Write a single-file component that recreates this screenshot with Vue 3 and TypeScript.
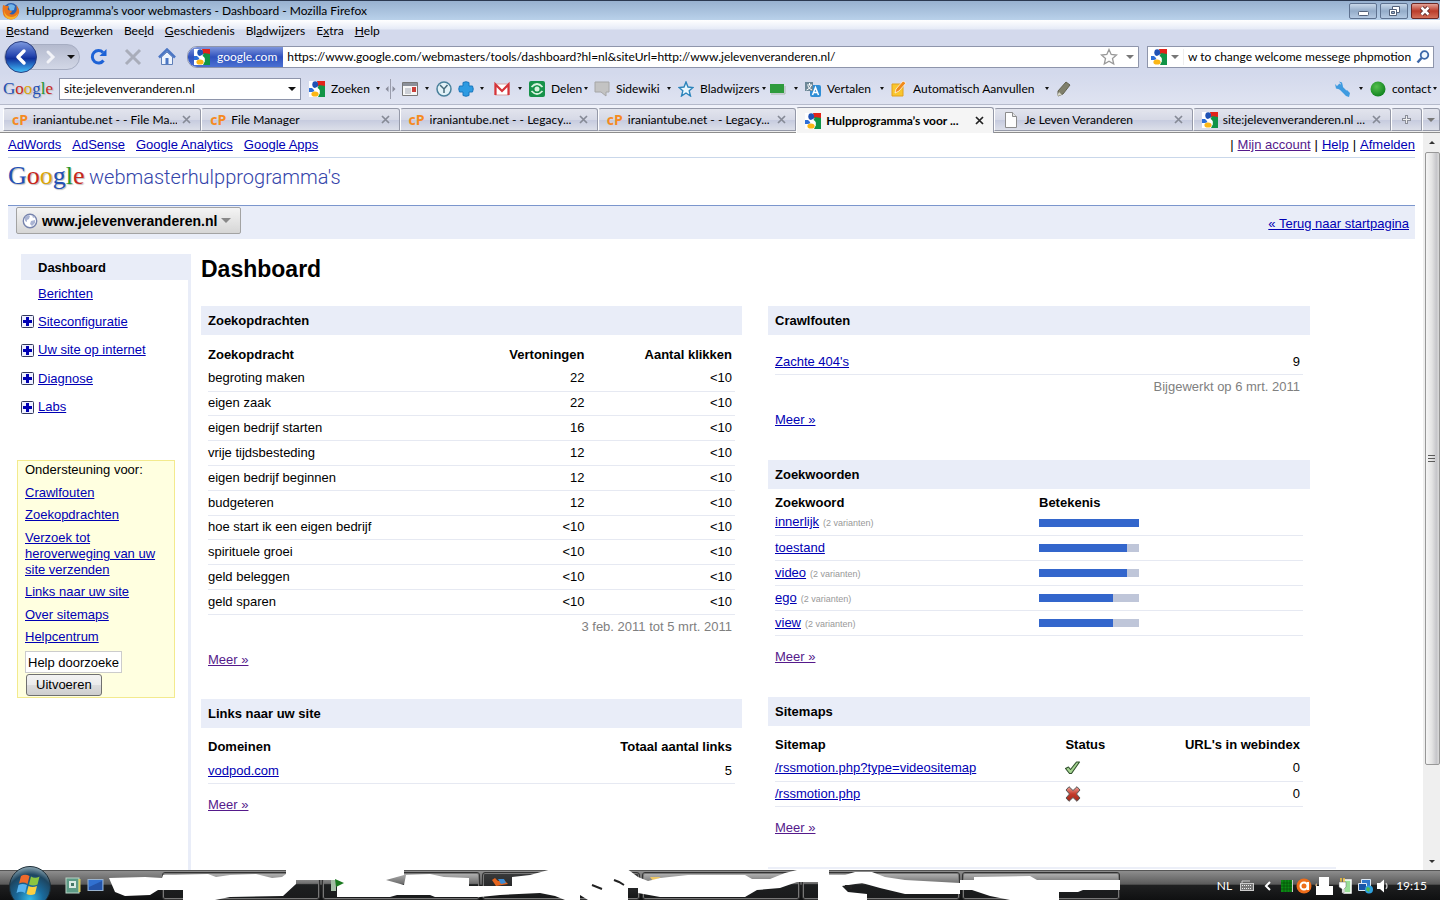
<script setup lang="ts">
interface MenuEntry { before: string; key: string; after: string }
interface Tab { icon: string; title: string; active?: boolean }
interface Query { term: string; shown: string; clicks: string }
interface Keyword { word: string; variants?: string; weight: number }
interface Sitemap { path: string; ok: boolean; urls: number }

const menu: MenuEntry[] = [
  { before: '', key: 'B', after: 'estand' },
  { before: 'Be', key: 'w', after: 'erken' },
  { before: 'Bee', key: 'l', after: 'd' },
  { before: '', key: 'G', after: 'eschiedenis' },
  { before: 'Bl', key: 'a', after: 'dwijzers' },
  { before: 'E', key: 'x', after: 'tra' },
  { before: '', key: 'H', after: 'elp' },
]

const tabs: Tab[] = [
  { icon: 'cp', title: 'iraniantube.net - - File Ma...' },
  { icon: 'cp', title: 'File Manager' },
  { icon: 'cp', title: 'iraniantube.net - - Legacy...' },
  { icon: 'cp', title: 'iraniantube.net - - Legacy...' },
  { icon: 'google', title: 'Hulpprogramma’s voor ...', active: true },
  { icon: 'page', title: 'Je Leven Veranderen' },
  { icon: 'google', title: 'site:jelevenveranderen.nl ...' },
]

const products: string[] = ['AdWords', 'AdSense', 'Google Analytics', 'Google Apps']
const sections: string[] = ['Siteconfiguratie', 'Uw site op internet', 'Diagnose', 'Labs']
const helpLinks: string[] = [
  'Crawlfouten', 'Zoekopdrachten', 'Verzoek tot heroverweging van uw site verzenden',
  'Links naar uw site', 'Over sitemaps', 'Helpcentrum',
]

const queries: Query[] = [
  { term: 'begroting maken', shown: '22', clicks: '<10' },
  { term: 'eigen zaak', shown: '22', clicks: '<10' },
  { term: 'eigen bedrijf starten', shown: '16', clicks: '<10' },
  { term: 'vrije tijdsbesteding', shown: '12', clicks: '<10' },
  { term: 'eigen bedrijf beginnen', shown: '12', clicks: '<10' },
  { term: 'budgeteren', shown: '12', clicks: '<10' },
  { term: 'hoe start ik een eigen bedrijf', shown: '<10', clicks: '<10' },
  { term: 'spirituele groei', shown: '<10', clicks: '<10' },
  { term: 'geld beleggen', shown: '<10', clicks: '<10' },
  { term: 'geld sparen', shown: '<10', clicks: '<10' },
]

const keywords: Keyword[] = [
  { word: 'innerlijk', variants: '(2 varianten)', weight: 100 },
  { word: 'toestand', weight: 88 },
  { word: 'video', variants: '(2 varianten)', weight: 88 },
  { word: 'ego', variants: '(2 varianten)', weight: 74 },
  { word: 'view', variants: '(2 varianten)', weight: 74 },
]

const sitemaps: Sitemap[] = [
  { path: '/rssmotion.php?type=videositemap', ok: true, urls: 0 },
  { path: '/rssmotion.php', ok: false, urls: 0 },
]
</script>

<template>
  <div class="screen">
    <svg class="sprite" width="0" height="0" aria-hidden="true">
      <defs>
        <linearGradient id="orbBlue" x1="0" y1="0" x2="0" y2="1">
          <stop offset="0" stop-color="#7f9be0" /><stop offset=".45" stop-color="#2747b0" />
          <stop offset=".55" stop-color="#10309c" /><stop offset="1" stop-color="#43c3fb" />
        </linearGradient>
        <linearGradient id="xRed" x1="0" y1="0" x2="0" y2="1">
          <stop offset="0" stop-color="#eba59c" /><stop offset=".5" stop-color="#c43a2a" /><stop offset="1" stop-color="#a02a1c" />
        </linearGradient>
        <radialGradient id="startOrb" cx=".5" cy=".8" r=".8">
          <stop offset="0" stop-color="#35b9e6" /><stop offset=".4" stop-color="#1a6a9c" />
          <stop offset=".75" stop-color="#1d4560" /><stop offset="1" stop-color="#8fa9b5" />
        </radialGradient>
        <radialGradient id="greenBall" cx=".4" cy=".35" r=".7">
          <stop offset="0" stop-color="#55c04d" /><stop offset="1" stop-color="#0c7f1c" />
        </radialGradient>
      </defs>
      <symbol id="google" viewBox="0 0 16 16">
        <path fill="#fff" d="M0 0h16v16H0z" /><path fill="#e2231a" d="M8 0h8v5H9z" />
        <path fill="#109446" d="M10 4l6 1v11H9l2-4-3-4z" /><path fill="#2d6fd8" d="M0 7h3l3 3-3 1H0z" />
        <ellipse cx="6.2" cy="3.6" rx="2.9" ry="3.4" fill="#1f52b5" /><path fill="#fff" d="M7 6l3 2 1 2-1 3-3-2-2-1z" />
        <ellipse cx="6" cy="13" rx="3.6" ry="2.6" fill="#fbb615" />
      </symbol>
      <symbol id="page" viewBox="0 0 16 16">
        <path d="M2.500.5h7l4 4v11h-11z" fill="#fdfdfd" stroke="#8c8c8c" /><path d="M9.500.5v4h4" fill="#e5e5e5" stroke="#8c8c8c" />
      </symbol>
      <symbol id="plus" viewBox="0 0 13 13">
        <rect x=".5" y=".5" width="12" height="12" rx="1" fill="#eef0ff" stroke="#33395c" />
        <path d="M5 2h3v3h3v3H8v3H5V8H2V5h3z" fill="#0000b4" />
      </symbol>
      <symbol id="fox" viewBox="0 0 18 18">
        <circle cx="9" cy="8.500" r="7.500" fill="#2b5fb0" /><path d="M6 3q4-2 7 1l-1 4-4 1z" fill="#6fb4ea" />
        <path d="M1 3l3 1q2-1 3 1-2 1-1 3l4 1q-1 3-3 2 3 3 6 0 3-3 1-8 4 4 3 8-2 6-8 6.500Q1 17 .6 9 .4 6 1 3z" fill="#e8741c" />
        <path d="M2 8q1 6 7 7 5 0 7-4-1 6-7 6.500Q2 17 2 8z" fill="#f7b32b" />
      </symbol>
    </svg>

    <header class="chrome">
      <div class="titlebar">
        <svg width="18" height="18"><use href="#fox" /></svg>
        <span>Hulpprogramma’s voor webmasters - Dashboard - Mozilla Firefox</span>
        <div class="winbuttons">
          <button type="button" aria-label="Minimaliseren"><svg width="26" height="14"><rect x="8.500" y="7.500" width="10" height="4" rx="1" fill="#fff" stroke="#53617a" /></svg></button>
          <button type="button" aria-label="Herstellen"><svg width="26" height="14" fill="#fff" stroke="#53617a"><path d="M11.500 2.500h7v6h-7z" /><path d="M8.500 5.500h7v6h-7z" /><path d="M10.500 7.500h3v2h-3z" fill="#8fa6c4" /></svg></button>
          <button type="button" class="close" aria-label="Sluiten"><svg width="26" height="14"><path d="M9.500 3.500l7 7m0-7l-7 7" stroke="#5c2a2a" stroke-width="4.500" /><path d="M9.500 3.500l7 7m0-7l-7 7" stroke="#fff" stroke-width="2.500" /></svg></button>
        </div>
      </div>

      <nav class="menubar">
        <button v-for="m in menu" :key="m.after" type="button">{{ m.before }}<u>{{ m.key }}</u>{{ m.after }}</button>
      </nav>

      <div class="navbar">
        <div class="history">
          <button type="button" class="back" aria-label="Vorige"><svg width="32" height="32"><circle cx="16" cy="16" r="15.500" fill="url(#orbBlue)" stroke="#2a3f80" /><path d="M19 10l-6 6 6 6" fill="none" stroke="#fff" stroke-width="3.500" stroke-linecap="round" stroke-linejoin="round" /></svg></button>
          <button type="button" class="forward" aria-label="Volgende"><svg width="26" height="24"><path d="M11 7l5 5-5 5" fill="none" stroke="#f2f3f8" stroke-width="3" stroke-linecap="round" /></svg></button>
          <button type="button" class="recent" aria-label="Recente pagina's"><i class="arrow big"></i></button>
        </div>
        <button type="button" aria-label="Vernieuwen"><svg width="18" height="18"><path d="M13.500 12.500A6.200 6.200 0 1 1 13 4.500" fill="none" stroke="#1d62d6" stroke-width="3" /><path d="M16.500 1v7h-7z" fill="#1d62d6" /></svg></button>
        <button type="button" aria-label="Stoppen"><svg width="18" height="18"><path d="M2 2l14 14M16 2L2 16" stroke="#a9adba" stroke-width="3" /></svg></button>
        <button type="button" aria-label="Startpagina"><svg width="18" height="18"><path d="M3.500 9v7.500h11V9L9 4z" fill="#eef4fd" stroke="#5f7fb8" /><path d="M1 9.500l8-8 8 8" fill="none" stroke="#4b76c4" stroke-width="2.500" /><path d="M7.500 10h3v6h-3z" fill="#4b76c4" /></svg></button>
        <div class="address">
          <span class="identity"><svg width="16" height="16"><use href="#google" /></svg>google.com</span>
          <input type="text" aria-label="Adres" value="https://www.google.com/webmasters/tools/dashboard?hl=nl&siteUrl=http://www.jelevenveranderen.nl/">
          <svg width="18" height="18"><path d="M9 1.500l2.200 5 5.300.5-4 3.500 1.200 5.500L9 13.200 4.300 16l1.200-5.500L1.500 7l5.300-.5z" fill="#fdfdfd" stroke="#999" stroke-width="1.300" /></svg>
          <i class="arrow big grey"></i>
        </div>
        <div class="websearch">
          <span class="engine"><svg width="16" height="16"><use href="#google" /></svg><i class="arrow big grey"></i></span>
          <input type="text" aria-label="Zoeken op internet" value="w to change welcome messege phpmotion">
          <svg width="14" height="14"><circle cx="8.500" cy="5" r="3.800" fill="#eef6ff" stroke="#3b66a8" stroke-width="1.800" /><path d="M5.500 8L1.500 12.500" stroke="#3b66a8" stroke-width="2.500" /></svg>
        </div>
      </div>

      <div class="gtoolbar">
        <span class="glogo small"><b class="bl">G</b><b class="re">o</b><b class="ye">o</b><b class="bl">g</b><b class="gr">l</b><b class="re">e</b></span>
        <div class="combo"><input type="text" aria-label="Google zoeken" value="site:jelevenveranderen.nl"><i class="arrow big"></i></div>
        <button type="button" class="first"><svg width="16" height="16"><use href="#google" /></svg>Zoeken<i class="arrow"></i></button>
        <svg width="12" height="20"><path d="M5.500 0v20" stroke="#9a9dac" /><path d="M3.500 7v6L.5 10zM7.500 7v6l3-3z" fill="#8a8d9c" /></svg>
        <button type="button" aria-label="Nieuws"><svg width="16" height="16"><path d="M.5 1.500h15v13H.5z" fill="#f7f7f7" stroke="#777" /><path d="M1 2h14v3H1z" fill="#8b9099" /><path d="M3 7h6v6H3z" fill="#cdd0d6" /><path d="M10 6h4v5h-4z" fill="#c9403a" /></svg><i class="arrow"></i></button>
        <button type="button" aria-label="Geschiedenis"><svg width="16" height="16"><circle cx="8" cy="8" r="7" fill="#e2f1f7" stroke="#49809b" stroke-width="1.500" /><path d="M4 4l4 4 3.500-4M8 8v4" fill="none" stroke="#44697a" stroke-width="1.500" /></svg></button>
        <button type="button" class="wide" aria-label="Toevoegen"><svg width="16" height="16"><path d="M5 1.500q3-1.500 6 0V5h3.500q1.500 3 0 6H11v3.500q-3 1.500-6 0V11H1.500Q0 8 1.500 5H5z" fill="#2d9be2" stroke="#1876bd" /></svg><i class="arrow"></i></button>
        <button type="button" aria-label="Gmail"><svg width="16" height="16"><path d="M1 3h14v11H1z" fill="#fff" stroke="#d9a5a5" /><path d="M1.500 14V3.500L8 10l6.500-6.500V14" fill="none" stroke="#d6343a" stroke-width="2.200" /></svg><i class="arrow"></i></button>
        <button type="button"><svg width="16" height="16"><rect width="16" height="16" rx="2" fill="#17924a" /><path d="M2.500 6Q8 0 13.500 6M2.500 10Q8 16 13.500 10" fill="none" stroke="#d8f3de" stroke-width="1.800" /><circle cx="8" cy="8" r="2.500" fill="#d8f3de" /></svg>Delen<i class="arrow tight"></i></button>
        <button type="button"><svg width="16" height="16"><path d="M1 1h14v10h-3v4l-5-4H1z" fill="#c3c3c3" stroke="#a6a6a6" /></svg>Sidewiki<i class="arrow"></i></button>
        <button type="button"><svg width="16" height="16"><path d="M8 1l2 5 5 .5-3.800 3.300L12.500 15 8 12l-4.500 3 1.300-5.200L1 6.500 6 6z" fill="#e9f7fe" stroke="#2b84bb" stroke-width="1.400" /></svg>Bladwijzers<i class="arrow tight"></i></button>
        <button type="button" aria-label="PageRank"><svg width="16" height="16"><path d="M0 3h14v9H0z" fill="#2e9b3d" /><path d="M1 13h14V5" fill="none" stroke="#a9b7ad" /></svg><i class="arrow"></i></button>
        <button type="button"><svg width="16" height="16"><rect x="5" y="4" width="11" height="12" rx="2" fill="#2f8ed6" /><path d="M0 1h8v9H0z" fill="#6c8797" /><path d="M2 4h5M4.500 2v2m2 0Q5 8 1.500 9M3 5q1 3 4 4" stroke="#fff" fill="none" /><path d="M7.500 14L10.500 6.500 13.500 14M8.500 11.500h4" stroke="#fff" stroke-width="1.500" fill="none" /></svg>Vertalen<i class="arrow"></i></button>
        <button type="button"><svg width="16" height="16"><path d="M1 3h11v12H1z" fill="#f9c62d" stroke="#e2a01c" /><path d="M4 12l1-4 7-8 3 2-7 8z" fill="#f08a1b" stroke="#fff" stroke-width=".7" /></svg>Automatisch Aanvullen<i class="arrow"></i></button>
        <button type="button" aria-label="Markeren"><svg width="16" height="16"><path d="M2 10l8-9 4 3-7 9-5 2z" fill="#7f7f6b" stroke="#61614f" /><path d="M1 15l2-4 3 3z" fill="#d8d8c8" /></svg></button>
        <span></span>
        <button type="button" aria-label="Instellingen"><svg width="16" height="16"><path d="M4 4l9 9" stroke="#3f9be0" stroke-width="4" /><path d="M1 3l3 3 3-3-2-2.500 3 1 1 4-3 3-4-1zM10 12l3-3 3 3-1 4-3-1z" fill="#3f9be0" /></svg><i class="arrow"></i></button>
        <button type="button" class="account"><svg width="16" height="16"><circle cx="8" cy="8" r="7.500" fill="url(#greenBall)" /></svg>contact<i class="arrow tight"></i></button>
      </div>

      <div class="tabs">
        <div v-for="(t, i) in tabs" :key="i" class="tab" :class="{ active: t.active }">
          <span v-if="t.icon === 'cp'" class="cp">cP</span>
          <svg v-else width="16" height="16"><use :href="'#' + t.icon" /></svg>
          <button type="button" class="name">{{ t.title }}</button>
          <button type="button" class="x" aria-label="Tabblad sluiten"><svg width="9" height="9"><path d="M1 1l7 7M8 1L1 8" stroke="currentColor" stroke-width="1.700" /></svg></button>
        </div>
        <button type="button" class="tab extra" aria-label="Nieuw tabblad"><svg width="9" height="9"><path d="M4.500 0v9M0 4.500h9" stroke="#8b8e98" stroke-width="3" /><path d="M4.500 1v7M1 4.500h7" stroke="#eee" stroke-width="1" /></svg></button>
        <button type="button" class="tab more" aria-label="Alle tabbladen"><i class="arrow big grey"></i></button>
      </div>
    </header>

    <div class="viewport">
      <div class="page">
        <div class="toplinks">
          <nav><a v-for="p in products" :key="p" href="#">{{ p }}</a></nav>
          <nav class="user">| <a href="#" class="seen">Mijn account</a> | <a href="#">Help</a> | <a href="#">Afmelden</a></nav>
        </div>
        <div class="brand">
          <span class="glogo"><b class="bl">G</b><b class="re">o</b><b class="ye">o</b><b class="bl">g</b><b class="gr">l</b><b class="re">e</b></span>
          <span class="product">webmasterhulpprogramma's</span>
        </div>
        <div class="sitebar">
          <button type="button" class="site">
            <svg width="16" height="16"><circle cx="8" cy="8" r="6.700" fill="#fff" stroke="#7784ad" stroke-width="1.400" /><path d="M3 4l3-2 2 1-1 3-2 1v2l-2-1zM9 8l4-1v3l-3 3-2-2zM10 2l3 2-2 1z" fill="#aab4d3" /></svg>
            www.jelevenveranderen.nl<i class="arrow site-arrow"></i>
          </button>
          <a href="#">« Terug naar startpagina</a>
        </div>

        <div class="body">
          <aside>
            <ul class="sections">
              <li class="current">Dashboard</li>
              <li class="plain"><a href="#">Berichten</a></li>
              <li v-for="s in sections" :key="s" class="group"><button type="button" :aria-label="s + ' uitvouwen'"><svg width="13" height="13"><use href="#plus" /></svg></button><a href="#">{{ s }}</a></li>
            </ul>
            <div class="help">
              <p>Ondersteuning voor:</p>
              <ul><li v-for="h in helpLinks" :key="h"><a href="#">{{ h }}</a></li></ul>
              <form @submit.prevent>
                <input type="text" aria-label="Help doorzoeken" value="Help doorzoeke">
                <button type="submit">Uitvoeren</button>
              </form>
            </div>
          </aside>

          <main>
            <h1>Dashboard</h1>
            <div class="columns">
              <div>
                <section class="queries">
                  <h2>Zoekopdrachten</h2>
                  <table>
                    <thead><tr><th>Zoekopdracht</th><th class="num mid">Vertoningen</th><th class="num last">Aantal klikken</th></tr></thead>
                    <tbody>
                      <tr v-for="q in queries" :key="q.term"><td>{{ q.term }}</td><td class="num">{{ q.shown }}</td><td class="num">{{ q.clicks }}</td></tr>
                    </tbody>
                  </table>
                  <p class="date">3 feb. 2011 tot 5 mrt. 2011</p>
                  <a href="#" class="more-link seen">Meer »</a>
                </section>
                <section>
                  <h2>Links naar uw site</h2>
                  <table>
                    <thead><tr><th>Domeinen</th><th class="num">Totaal aantal links</th></tr></thead>
                    <tbody><tr><td><a href="#">vodpod.com</a></td><td class="num">5</td></tr></tbody>
                  </table>
                  <a href="#" class="more-link seen">Meer »</a>
                </section>
              </div>
              <div>
                <section class="crawl">
                  <h2>Crawlfouten</h2>
                  <table><tbody><tr><td><a href="#">Zachte 404's</a></td><td class="num">9</td></tr></tbody></table>
                  <p class="date">Bijgewerkt op 6 mrt. 2011</p>
                  <a href="#" class="more-link">Meer »</a>
                </section>
                <section class="keywords">
                  <h2>Zoekwoorden</h2>
                  <table>
                    <thead><tr><th>Zoekwoord</th><th class="half">Betekenis</th></tr></thead>
                    <tbody>
                      <tr v-for="k in keywords" :key="k.word">
                        <td><a href="#">{{ k.word }}</a><small v-if="k.variants">{{ k.variants }}</small></td>
                        <td><div class="meter"><div :style="{ width: k.weight + '%' }"></div></div></td>
                      </tr>
                    </tbody>
                  </table>
                  <a href="#" class="more-link seen">Meer »</a>
                </section>
                <section class="maps">
                  <h2>Sitemaps</h2>
                  <table>
                    <thead><tr><th>Sitemap</th><th class="status">Status</th><th class="num urls">URL's in webindex</th></tr></thead>
                    <tbody>
                      <tr v-for="s in sitemaps" :key="s.path">
                        <td><a href="#">{{ s.path }}</a></td>
                        <td>
                          <svg v-if="s.ok" width="16" height="16" role="img" aria-label="OK"><path d="M.5 8.500L3.500 7l2 2.500 6-7.500h3L6.500 13.500H4.500z" fill="#a5d491" stroke="#2f4f2c" stroke-width="1.100" stroke-linejoin="round" /></svg>
                          <svg v-else width="16" height="16" role="img" aria-label="Fout"><path d="M4 .7L8 4.500 12 .7 15 4l-3.500 4 3.500 4-3 3.300L8 11.500l-4 3.800L1 12l3.500-4L1 4z" fill="url(#xRed)" stroke="#555" stroke-linejoin="round" /></svg>
                        </td>
                        <td class="num">{{ s.urls }}</td>
                      </tr>
                    </tbody>
                  </table>
                  <a href="#" class="more-link seen">Meer »</a>
                </section>
              </div>
            </div>
          </main>
        </div>
      </div>
      <div class="scrollbar">
        <i class="arrow up"></i>
        <div class="thumb"><svg width="8" height="9"><path d="M0 1.500h7M0 4.500h7M0 7.500h7" stroke="#5b5b5b" /></svg></div>
        <i class="arrow down"></i>
      </div>
    </div>

    <footer class="taskbar">
      <button type="button" class="start" aria-label="Start">
        <svg width="42" height="34" viewBox="0 0 42 34"><circle cx="21" cy="21" r="20.500" fill="url(#startOrb)" stroke="#1b2c36" />
          <path d="M12 10q4-2.500 8.500 0l-2 8q-4-2.500-8.500-.5z" fill="#ee6a2c" /><path d="M22 10.500q4 2.500 8.500 0l-2 8q-4 2-8.500 0z" fill="#8cc540" />
          <path d="M9.500 19q4-2 8.500 0l-2 8q-4-2.500-8.500 0z" fill="#58b3ef" /><path d="M19.500 20q4 2 8.500 0l-2 8q-4 2-8.500 0z" fill="#fbd042" /></svg>
      </button>
      <svg class="quick" width="40" height="18"><rect x="1" y="1" width="13" height="15" fill="#5d9b86" stroke="#b9d4c6" /><rect x="4" y="4" width="7" height="7" fill="#dcebe4" /><path d="M6 6h3v3H6z" fill="#467767" /><path d="M14.500 2v13" stroke="#d8cf62" stroke-width="2" /><rect x="23" y="2.500" width="15" height="11" fill="#3171d0" stroke="#9ab3cf" /><path d="M24 10L37 4v9H24z" fill="#2454a8" /></svg>
      <div class="tasks"><i></i><i></i><i class="on"></i><i></i><i></i><i></i></div>
      <div class="tray">
        <span>NL</span>
        <svg width="16" height="12"><path d="M3 3V1h8" fill="none" stroke="#ccc" /><rect x="1.500" y="3.500" width="13" height="7" fill="#777" stroke="#ccc" /><path d="M3 5.500h10M3 8.500h10" stroke="#eee" stroke-dasharray="1 1" /></svg>
        <svg width="8" height="10"><path d="M6 1L2 5l4 4" fill="none" stroke="#fff" stroke-width="2" /></svg>
        <svg width="12" height="12"><path d="M0 0h11v12H0z" fill="#0b8a14" /><path d="M0 3h11M0 6h11M0 9h11M3 0v12M6 0v12M9 0v12" stroke="#063f08" stroke-width=".6" /><path d="M11.500 0v12" stroke="#ccc" /></svg>
        <svg width="16" height="16"><circle cx="8" cy="8" r="7.500" fill="#ee6d1a" /><circle cx="8" cy="8" r="3.500" fill="none" stroke="#fff" stroke-width="2" /><path d="M12 4v8" stroke="#fff" stroke-width="2" /></svg>
        <svg width="20" height="20"><path d="M0 9l2-2v5z" fill="#c9a57a" /><path d="M4 1h10v9h4v9H1v-9h3z" fill="#fff" /></svg>
        <svg width="16" height="16"><path d="M6 2h7v13H6z" fill="#9adf98" stroke="#fff" stroke-width="1.500" /><path d="M3 0v4M6 0v4" stroke="#f3c33b" stroke-width="1.500" /><path d="M1 4h7v5l-2 2v4H4v-4L1 9z" fill="#fff" stroke="#666" stroke-width=".5" /></svg>
        <svg width="16" height="16"><path d="M4.500 1.500h9v7h-9z" fill="#2f78cc" stroke="#dce8f4" /><path d="M1.500 5.500h8v7h-8z" fill="#1955a5" stroke="#dce8f4" /><circle cx="12" cy="11.500" r="4" fill="#2fa2df" /><path d="M10 9l3 1-1 4-3-2z" fill="#4fbd53" /></svg>
        <svg width="13" height="14"><path d="M1 4h3l4-3.500v13L4 10H1z" fill="#fff" /><path d="M10 4q2 3 0 6" fill="none" stroke="#ccc" stroke-width="1.300" /></svg>
        <time>19:15</time>
      </div>
      <!-- white strokes that cover the task buttons -->
      <svg class="scribble" viewBox="0 0 1440 40" aria-hidden="true">
        <path d="M650 17H661L653 21z" fill="#edc765" />
        <g fill="#fff">
          <path d="M109 18L145 17 162 18 163 15 175 15 208 14 216 17 230 15 256 14 272 18 282 17 286 14V9H404V15L386 20 404 25 406 15 430 14 444 17 469 18V26H480V37H435L430 35H397L390 37H337V20H296V24L283 36 230 37 215 40H183V30H158L150 35 125 36 115 32z" />
          <path d="M480 26H512V17L530 15 552 9H627L630 11 638 17V28H628V40H588L580 35V40H565L555 36 540 33 500 35 480 37z" />
          <path d="M638 17L648 21 660 18 688 15H745L752 19H770L785 13 797 10V9H829V40H818V22H797L780 28 757 30 745 37H660L638 33z" />
          <path d="M829 15H845L855 12H872L885 17 905 20 960 23V34H905L880 28 862 23 842 26 848 32 867 34V40H829z" />
          <path d="M960 20H974V17L1030 16 1037 20H1120V30H1083L1078 32H1059V40H1010L990 36 972 30H960z" />
        </g>
        <path d="M331 20h5v11h-5z" fill="#a5bda6" /><path d="M335 19L344 23 336 27z" fill="#1b7a20" />
        <path d="M492 20L495 18 498 21 504 20 508 24 496 26z" fill="#e5641d" /><path d="M498 19H504L506 23 501 24z" fill="#3b8ad4" />
        <path d="M592 25L597 27 602 29M614 20L619 22 624 25M845 26H851V29" fill="none" stroke="#222" stroke-width="2" />
        <path d="M768 7h568v2H768z" fill="#eceff8" />
      </svg>
    </footer>
  </div>
</template>

<style>
html, body { margin: 0; height: 100%; }
#app { height: 100%; }
</style>

<style scoped>
* { box-sizing: border-box; }
.screen { height: 100vh; display: flex; flex-direction: column; overflow: hidden; background: #fff; font: 13px/16px "Liberation Sans", Arial, sans-serif; color: #000; }
.sprite { position: absolute; }
button, input { font: inherit; color: inherit; }
button { border: 0; padding: 0; background: none; display: inline-flex; align-items: center; white-space: nowrap; }
svg { display: block; flex: none; }
a { color: #0000b4; }
a.seen { color: #551a8b; }
ul { list-style: none; margin: 0; padding: 0; }
p { margin: 0; }

.arrow { flex: none; width: 0; height: 0; border: 2px solid transparent; border-top: 3px solid #111; border-bottom: 0; }
.arrow.big { border-width: 4px 4px 0; }
.arrow.grey { border-top-color: #777; }

/* browser window */
.chrome { flex: none; font: 12px/16px Lato, "Open Sans", sans-serif; background: #d3d9ec; }
.titlebar { height: 20px; display: flex; align-items: center; gap: 6px; padding: 0 1px 0 2px; border-top: 1px solid #2b3850; background: linear-gradient(#98b1d0, #b9d1ea); }
.winbuttons { margin-left: auto; display: flex; gap: 3px; }
.winbuttons button { border: 1px solid #5e7290; border-radius: 2px; background: linear-gradient(#c8d7e9, #94acc9 50%, #b4c9e2); }
.winbuttons .close { background: linear-gradient(#e3a297, #bb3c2b 50%, #d4705a); border-color: #6b2723; }
.menubar { height: 21px; display: flex; gap: 11px; padding-left: 6px; background: linear-gradient(#fff, #e6ebf7 9px, #d3d9ec 10px); }
.navbar { height: 32px; display: flex; align-items: center; gap: 16px; padding: 0 6px 0 4px; }
.history { display: flex; align-items: center; height: 26px; margin: 0 -6px 0 0; width: 76px; border: 1px solid #a6adc2; border-radius: 13px; background: linear-gradient(#b4bace, #d2d7e6); }
.history .recent { margin-left: 4px; }
.address { flex: 1; display: flex; align-items: center; height: 22px; margin: 0 -8px 0 -5px; border: 1px solid #8e95ab; border-radius: 10px 0 0 10px; background: #fff; padding-right: 4px; gap: 8px; }
.identity { height: 20px; display: flex; align-items: center; gap: 7px; padding: 0 6px 0 6px; border-radius: 9px 0 0 9px; color: #fff; background: linear-gradient(#7d95dc, #2f51bd 50%, #4b71d3); }
.address input { margin-left: -4px; }
input { border: 0; outline: 0; padding: 0; background: transparent; min-width: 0; flex: 1; }
.websearch { width: 287px; height: 22px; display: flex; align-items: center; gap: 4px; padding: 0 3px; border: 1px solid #8e95ab; background: #fff; }
.engine { display: flex; align-items: center; gap: 4px; padding-right: 4px; border-right: 1px solid #eee; }
.gtoolbar { height: 31px; display: grid; align-items: center; padding: 0 2px 0 3px; grid-template-columns: 56px 250px 76px 17px 34px 22px 36px 35px 65px 84px 92px 35px 86px 165px 20px 1fr 36px 68px; background: linear-gradient(#d3d9ec, #dfe3f1); }
.gtoolbar button { width: 100%; gap: 6px; }
.gtoolbar .arrow { margin-left: auto; margin-right: 7px; }
.gtoolbar .wide .arrow { margin-right: 14px; }
.gtoolbar .arrow.tight { margin-left: -4px; margin-right: 0; }
.gtoolbar .combo { width: 242px; height: 22px; display: flex; align-items: center; padding-left: 4px; border: 1px solid #8e95ab; background: #fff; }
.gtoolbar .combo .arrow { margin: 0 4px; }
.tabs { height: 29px; display: flex; padding: 3px 0 0 3px; border-bottom: 1px solid #8d8d8d; background: linear-gradient(#f0f2fa 25px, #eee 26px); border-top: 1px solid #b5bacb; }
.tab { flex: 1; min-width: 0; height: 23px; display: flex; align-items: center; padding: 0 9px 0 8px; gap: 5px; border: 1px solid #9599a8; border-left-color: #fff; border-radius: 3px 3px 0 0; background: linear-gradient(#e2e4ed, #d6d9e6 50%, #c5cade 51%, #dcdfe9); }
.tab.active { height: 26px; margin-top: -1px; font-weight: 700; background: #f5f5f5; border-bottom: 0; }
.tab .name { flex: 1; min-width: 0; overflow: hidden; }
.tab .x { color: #868a96; }
.tab.active .x { color: #222; }
.tab.extra { flex: 0 0 31px; padding: 0; justify-content: center; }
.tab.more { flex: 0 0 18px; padding: 0; justify-content: center; }
.cp { width: 16px; font: bold 14px/16px "Open Sans", sans-serif; color: #f58a1f; }

.glogo { font: 26px/36px "Liberation Serif", serif; width: 75px; }
.glogo.small { font-size: 17px; line-height: 24px; width: 50px; }
.glogo b { font-weight: 400; text-shadow: 1px 1px 1px #bbb; }
.bl { color: #2350b5; } .re { color: #c8271c; } .ye { color: #dba60b; } .gr { color: #22962d; }

/* document */
.viewport { flex: 1; min-height: 0; display: flex; }
.page { flex: 1; min-width: 0; padding: 0 8px; display: flex; flex-direction: column; overflow: hidden; }
.toplinks { height: 25px; flex: none; display: flex; justify-content: space-between; align-items: center; border-bottom: 1px solid #c9d7ea; }
.toplinks nav { display: flex; gap: 11px; }
.toplinks .user { gap: 4px; }
.brand { height: 47px; flex: none; display: flex; align-items: flex-start; gap: 6px; }
.product { font: 300 20px/38px Roboto, sans-serif; color: #3344aa; }
.sitebar { height: 34px; flex: none; display: flex; align-items: center; justify-content: space-between; padding: 0 6px 0 8px; border-top: 1px solid #7b96cd; background: #e9edf8; }
.sitebar a { margin-top: 2px; }
.site { height: 27px; margin-bottom: 4px; padding: 0 9px 0 5px; gap: 4px; border: 1px solid #a3a3a3; border-radius: 2px; font-weight: 700; font-size: 14px; background: linear-gradient(#f4f4f4, #d6d6d6); }
.site-arrow { border-width: 5px 5px 0; border-top-color: #888; }
.body { flex: 1; min-height: 0; display: flex; padding-top: 15px; }
aside { width: 183px; flex: none; border-right: 3px solid #e9edf8; }
.sections { padding-left: 13px; }
.sections li { height: 28px; display: flex; align-items: center; gap: 4px; padding-top: 2px; }
.sections .group:nth-child(odd) { height: 29px; }
.sections .current, .sections .plain { height: 26px; padding-left: 17px; }
.sections .current { font-weight: 700; background: #e9edf8; }
.help { margin: 40px 13px 0 9px; padding: 0 7px; border: 1px solid #f3ea8e; background: #ffffe0; }
.help li { padding: 7px 0 0; }
.help li:nth-child(even) { padding-top: 6px; }
.help p { padding-top: 1px; }
.help form { display: flex; flex-direction: column; align-items: flex-start; margin-top: 6px; }
.help input { flex: none; width: 97px; height: 22px; padding: 0 2px; border: 1px solid #ccc; background: #fff; }
.help form button { height: 22px; margin: 1px; padding: 0 9px; border: 1px solid #707070; border-radius: 3px; background: linear-gradient(#f3f3f3, #ebebeb 50%, #dcdcdc 51%, #cecece); }
main { flex: 1; min-width: 0; padding: 0 105px 0 10px; }
h1 { margin: 0 0 22px; font-size: 23px; line-height: 30px; }
.columns { display: grid; grid-template-columns: 541fr 542fr; gap: 26px; }
section { margin-bottom: 31px; }
h2 { margin: 0; height: 29px; padding: 0 7px; font-size: 13px; line-height: 30px; background: #e9edf8; }
table { width: calc(100% - 14px); margin: 0 7px; border-collapse: collapse; }
th { height: 31px; padding: 8px 0 0; text-align: left; }
td { height: 25px; padding: 0; border-bottom: 1px solid #e6e9f2; }
.queries tbody tr:nth-child(5n+2) td { height: 24px; }
.num { text-align: right; padding-right: 3px; }
.mid { width: 27%; }
.last { width: 28%; }
.date { height: 25px; padding: 4px 10px 0 0; text-align: right; color: #808080; }
.more-link { display: block; width: max-content; margin: 13px 7px 0; }
.date + .more-link { margin-top: 12px; }
.crawl { margin-bottom: 32px; }
.crawl tr td { height: 39px; padding-top: 16px; }
.half { width: 50%; }
.keywords { margin-bottom: 32px; }
.keywords th { height: 22px; padding: 6px 0 0; }
.maps th { height: 30px; padding-top: 7px; }
small { margin-left: 4px; font-size: 9px; color: #999; }
.meter { width: 100px; height: 8px; background: #bfc6d9; }
.meter div { height: 100%; background: #3366cc; }
.status { width: 17%; }
.urls { width: 28%; }

.scrollbar { width: 17px; flex: none; display: flex; flex-direction: column; align-items: center; background: #efefef; }
.thumb { width: 15px; flex: 614; margin-left: 1px; display: flex; align-items: center; justify-content: center; border: 1px solid #979797; border-radius: 2px; background: linear-gradient(90deg, #f5f5f5, #e4e4e4 45%, #c6c6ca 80%, #dadada); }
.scrollbar .up { margin: 8px 0; border: 3px solid transparent; border-top: 0; border-bottom: 3px solid #333; }
.scrollbar .down { margin: 95px 0 7px; border: 3px solid transparent; border-bottom: 0; border-top: 3px solid #333; }

.taskbar { position: relative; height: 30px; flex: none; display: flex; align-items: center; border-top: 1px solid #555; background: linear-gradient(#8d8d8d, #5b5b5b 45%, #1e1f20 50%, #0f1011); }
.start { position: absolute; left: 9px; bottom: 0; }
.quick { margin-left: 65px; }
.tasks { width: 958px; flex: none; display: flex; margin-left: 57px; height: 28px; gap: 2px; }
.tasks i { flex: 1; border: 1px solid #333; border-radius: 3px; box-shadow: inset 0 0 0 1px #777; background: linear-gradient(#b5b5b5, #6f6f6f 40%, #1d1f20 45%, #191a1b); }
.tasks i.on { background: linear-gradient(#3a3b3c, #151617); }
.tray { margin-left: auto; display: flex; align-items: center; gap: 3px; padding-right: 13px; color: #fff; font: 12px/16px Lato, "Open Sans", sans-serif; }
.tray span { margin-right: 4px; }
.tray time { margin-left: 4px; }
.tray svg:nth-of-type(2) { margin: 0 6px; }
.scribble { position: absolute; left: 0; bottom: 0; width: 1440px; height: 40px; }
</style>
